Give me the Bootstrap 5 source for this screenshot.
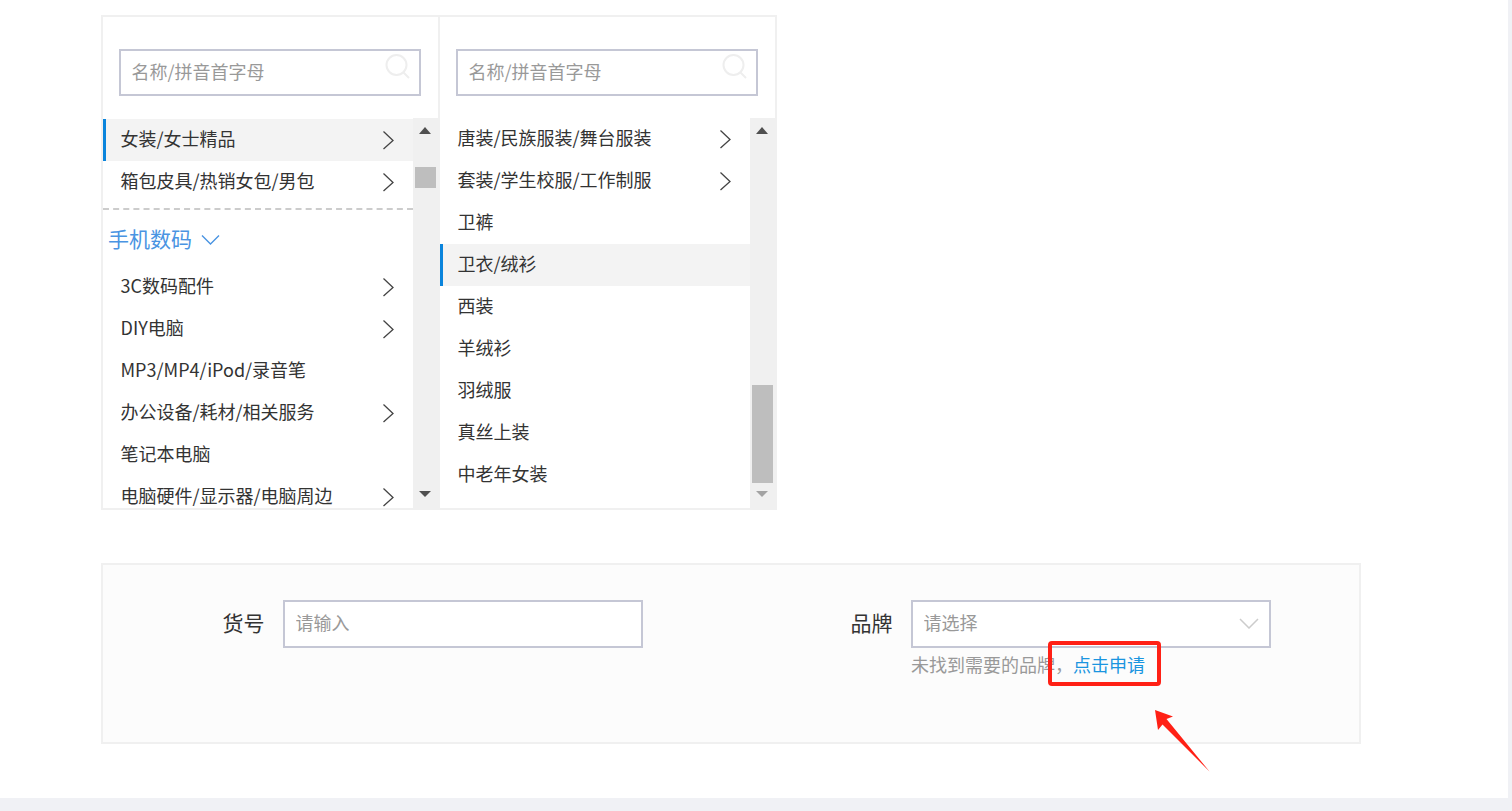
<!DOCTYPE html>
<html lang="zh-CN">
<head>
<meta charset="utf-8">
<title>类目选择</title>
<link href="https://cdn.jsdelivr.net/npm/bootstrap@5.3.0/dist/css/bootstrap.min.css" rel="stylesheet">
<style>
html,body{height:100%;overflow:hidden}
body{background:#f0f1f5;font-family:"Noto Sans CJK SC","Liberation Sans",sans-serif;font-size:18px;color:#333;font-weight:400}
.page-sheet{width:1508px;height:798px;background:#fff;padding:15px 0 0 101px}
.cat-panel{width:676px;height:495px;border:2px solid #f0f0f0}
.cat-col{width:335px;height:491px}
.cat-col+.cat-col{width:337px;border-left:2px solid #f0f0f0}
.cat-search{height:101px;padding:32px 18px 0 16px}
.cat-search-box{width:302px;height:47px}
.sketch-input.form-control{height:47px;border:2px solid #c5c7d5;border-radius:0;padding:0 10.5px 4px;font-size:18px;color:#333;background-color:#fff;box-shadow:none}
.sketch-input.form-control::placeholder{color:#999;opacity:1}
.search-glyph{position:absolute;top:5px;right:11px;width:25px;height:25px}
.cat-body{height:390px}
.cat-list{width:310px;height:390px;overflow:hidden}
.cat-list.first-list{padding-top:1px}
.cat-item{height:42px;padding:0 18px 0 14.5px;border-left:3px solid transparent;white-space:nowrap}
.cat-item span{margin-top:-4px}
.cat-item.on{background:#f3f3f3;border-left-color:#0a84dc}
.cat-item svg{width:13px;height:20px;flex:none}
.cat-rule{height:7px;border-bottom:2px dashed #ccc}
.cat-group{height:56px;padding-left:5px;color:#4a94e2;font-size:21px;line-height:60px;gap:9px}
.cat-group svg{width:19px;height:12px;margin-top:4px}
.fake-scroll{width:25px;height:390px;background:#f0f0f0;position:relative}
.fake-thumb{position:absolute;left:2px;width:21px;background:#bebebe}
.thumb-a{top:49px;height:21px}
.thumb-b{top:267px;height:98px}
.tri{position:absolute;left:6px;width:0;height:0;border-left:6px solid transparent;border-right:6px solid transparent}
.tri-up{top:9px;border-bottom:7px solid #505050}
.tri-down{top:373px;border-top:6px solid #505050}
.tri-down.dim{border-top-color:#a3a3a3}
.form-panel{width:1260px;height:181px;margin-top:53px;border:2px solid #f0f0f0;background:#fcfcfc;padding-top:35px}
.field-label{width:161.5px;height:45px;line-height:45px;font-size:21px;text-align:right;color:#333;flex:none}
.field-main{width:360px;margin-left:18.5px}
.sketch-input.form-control.tall{height:48px}
.drop-arrow{position:absolute;top:18px;right:12px;width:20px;height:11px}
.field-hint{color:#999;line-height:32px;white-space:nowrap}
.field-hint a{color:#1a95e0;text-decoration:none}
.red-mark{position:absolute;left:1048px;top:641px;width:113px;height:45px;border:4px solid #ff2015;border-radius:4px}
.red-arrow{position:absolute;left:1150px;top:705px;width:65px;height:70px}
</style>
</head>
<body>
<main class="page-sheet position-relative">
  <section class="cat-panel d-flex">
    <div class="cat-col">
      <div class="cat-search">
        <div class="cat-search-box position-relative">
          <input class="form-control sketch-input" placeholder="名称/拼音首字母">
          <svg class="search-glyph" viewBox="0 0 25 25" fill="none" stroke="#eeeeee" stroke-width="2"><circle cx="11.5" cy="11" r="10"/><path d="M18.5 18.500L24 24"/></svg>
        </div>
      </div>
      <div class="cat-body d-flex">
        <div class="cat-list first-list">
          <div class="cat-item on d-flex justify-content-between align-items-center"><span>女装/女士精品</span><svg viewBox="0 0 13 20" fill="none" stroke="#444" stroke-width="1.3"><path d="M1.500 1.500L11 10.500L1.500 19"/></svg></div>
          <div class="cat-item d-flex justify-content-between align-items-center"><span>箱包皮具/热销女包/男包</span><svg viewBox="0 0 13 20" fill="none" stroke="#444" stroke-width="1.3"><path d="M1.500 1.500L11 10.500L1.500 19"/></svg></div>
          <div class="cat-rule"></div>
          <div class="cat-group d-flex align-items-center"><span>手机数码</span><svg viewBox="0 0 19 12" fill="none" stroke="#4a94e2" stroke-width="1.4"><path d="M1 1.500L9.500 10L18 1.500"/></svg></div>
          <div class="cat-item d-flex justify-content-between align-items-center"><span>3C数码配件</span><svg viewBox="0 0 13 20" fill="none" stroke="#444" stroke-width="1.3"><path d="M1.500 1.500L11 10.500L1.500 19"/></svg></div>
          <div class="cat-item d-flex justify-content-between align-items-center"><span>DIY电脑</span><svg viewBox="0 0 13 20" fill="none" stroke="#444" stroke-width="1.3"><path d="M1.500 1.500L11 10.500L1.500 19"/></svg></div>
          <div class="cat-item d-flex justify-content-between align-items-center"><span>MP3/MP4/iPod/录音笔</span></div>
          <div class="cat-item d-flex justify-content-between align-items-center"><span>办公设备/耗材/相关服务</span><svg viewBox="0 0 13 20" fill="none" stroke="#444" stroke-width="1.3"><path d="M1.500 1.500L11 10.500L1.500 19"/></svg></div>
          <div class="cat-item d-flex justify-content-between align-items-center"><span>笔记本电脑</span></div>
          <div class="cat-item d-flex justify-content-between align-items-center"><span>电脑硬件/显示器/电脑周边</span><svg viewBox="0 0 13 20" fill="none" stroke="#444" stroke-width="1.3"><path d="M1.500 1.500L11 10.500L1.500 19"/></svg></div>
        </div>
        <div class="fake-scroll"><i class="tri tri-up"></i><i class="fake-thumb thumb-a"></i><i class="tri tri-down"></i></div>
      </div>
    </div>
    <div class="cat-col">
      <div class="cat-search">
        <div class="cat-search-box position-relative">
          <input class="form-control sketch-input" placeholder="名称/拼音首字母">
          <svg class="search-glyph" viewBox="0 0 25 25" fill="none" stroke="#eeeeee" stroke-width="2"><circle cx="11.5" cy="11" r="10"/><path d="M18.500 18.500L24 24"/></svg>
        </div>
      </div>
      <div class="cat-body d-flex">
        <div class="cat-list">
          <div class="cat-item d-flex justify-content-between align-items-center"><span>唐装/民族服装/舞台服装</span><svg viewBox="0 0 13 20" fill="none" stroke="#444" stroke-width="1.3"><path d="M1.500 1.500L11 10.500L1.500 19"/></svg></div>
          <div class="cat-item d-flex justify-content-between align-items-center"><span>套装/学生校服/工作制服</span><svg viewBox="0 0 13 20" fill="none" stroke="#444" stroke-width="1.3"><path d="M1.500 1.500L11 10.500L1.500 19"/></svg></div>
          <div class="cat-item d-flex align-items-center"><span>卫裤</span></div>
          <div class="cat-item on d-flex align-items-center"><span>卫衣/绒衫</span></div>
          <div class="cat-item d-flex align-items-center"><span>西装</span></div>
          <div class="cat-item d-flex align-items-center"><span>羊绒衫</span></div>
          <div class="cat-item d-flex align-items-center"><span>羽绒服</span></div>
          <div class="cat-item d-flex align-items-center"><span>真丝上装</span></div>
          <div class="cat-item d-flex align-items-center"><span>中老年女装</span></div>
        </div>
        <div class="fake-scroll"><i class="tri tri-up"></i><i class="fake-thumb thumb-b"></i><i class="tri tri-down dim"></i></div>
      </div>
    </div>
  </section>

  <section class="form-panel row g-0">
    <div class="col-6 d-flex align-items-start">
      <label class="field-label">货号</label>
      <div class="field-main"><input class="form-control sketch-input tall" placeholder="请输入"></div>
    </div>
    <div class="col-6 d-flex align-items-start">
      <label class="field-label">品牌</label>
      <div class="field-main">
        <div class="position-relative">
          <input class="form-control sketch-input tall" placeholder="请选择">
          <svg class="drop-arrow" viewBox="0 0 20 11" fill="none" stroke="#cccccc" stroke-width="1.500"><path d="M1 1L10 10L19 1"/></svg>
        </div>
        <div class="field-hint">未找到需要的品牌，<a href="#">点击申请</a></div>
      </div>
    </div>
  </section>

  <div class="red-mark"></div>
  <svg class="red-arrow" viewBox="0 0 65 70"><polygon points="5,5 23,11.500 16.500,14 59.500,66.500 12.500,19.500 8,25" fill="#ff2015"/></svg>
</main>
<script src="https://cdn.jsdelivr.net/npm/bootstrap@5.3.0/dist/js/bootstrap.bundle.min.js"></script>
</body>
</html>
